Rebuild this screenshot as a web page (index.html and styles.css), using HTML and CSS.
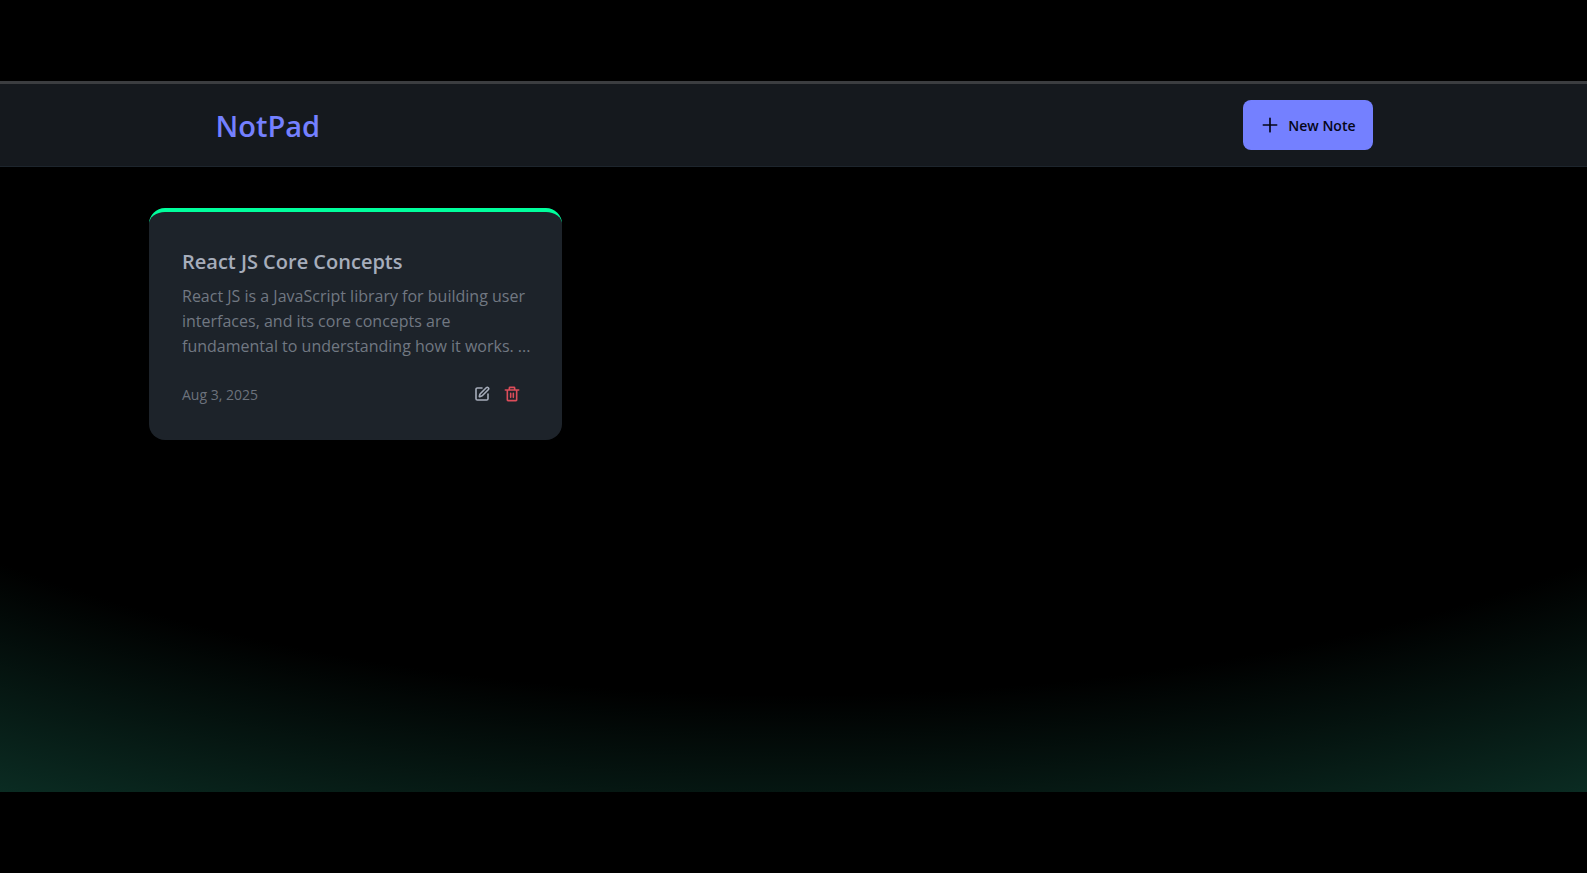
FILE: index.html
```html
<!DOCTYPE html>
<html lang="en">
<head>
<meta charset="utf-8">
<meta name="viewport" content="width=device-width, initial-scale=1">
<title>NotPad</title>
<link rel="stylesheet" href="styles.css">
</head>
<body>
<div class="app">
  <header class="navbar">
    <div class="navbar-inner">
      <h1 class="brand">NotPad</h1>
      <button class="new-note" type="button">
        <svg class="icon-plus" viewBox="0 0 24 24" aria-hidden="true"><path d="M4 12h16M12 4v16"/></svg>
        <span>New Note</span>
      </button>
    </div>
  </header>
  <main class="notes">
    <article class="card">
      <h2 class="card-title">React JS Core Concepts</h2>
      <p class="card-text">React JS is a JavaScript library for building user<br>interfaces, and its core concepts are<br>fundamental to understanding how it works. ...</p>
      <footer class="card-footer">
        <time class="card-date" datetime="2025-08-03">Aug 3, 2025</time>
        <div class="card-actions">
          <button class="icon-button" type="button" aria-label="Edit note">
            <svg class="icon" viewBox="0 0 24 24" aria-hidden="true"><path d="M12 3H5a2 2 0 0 0-2 2v14a2 2 0 0 0 2 2h14a2 2 0 0 0 2-2v-7"/><path d="M18.375 2.625a1 1 0 0 1 3 3l-9.013 9.014a2 2 0 0 1-.853.505l-2.873.84a.5.5 0 0 1-.62-.62l.84-2.873a2 2 0 0 1 .506-.852z"/></svg>
          </button>
          <button class="icon-button danger" type="button" aria-label="Delete note">
            <svg class="icon" viewBox="0 0 24 24" aria-hidden="true"><path d="M2 6h20M19 6v15a1 1 0 0 1-1 1H6a1 1 0 0 1-1-1V6M8 6V3a1 1 0 0 1 1-1h6a1 1 0 0 1 1 1v3M10 11v6M14 11v6"/></svg>
          </button>
        </div>
      </footer>
    </article>
  </main>
</div>
</body>
</html>
```
FILE: styles.css
```css
* { box-sizing: border-box; }

body {
  margin: 0;
  padding: 81px 0;
  background: #000;
  color: #a6adbb;
  font-family: "Segoe UI", "Open Sans", "Noto Sans", sans-serif;
}

.app {
  min-height: calc(100vh - 162px);
  border-top: 3px solid #3b3d40;
  background: radial-gradient(125% 125% at 50% 10%, #000 61%, #00ff9d40 105%) #1d232a;
}

.navbar {
  background: #15191e;
  border-bottom: 1px solid #1d252d;
}

.navbar-inner {
  display: flex;
  align-items: center;
  justify-content: space-between;
  max-width: 1190px;
  margin: 0 auto;
  padding: 16px 16px 16px 17px;
}

.brand {
  margin: 0;
  padding-top: 2px;
  color: #7480ff;
  font-size: 29px;
  font-weight: 600;
  line-height: 40px;
}

.new-note {
  display: flex;
  align-items: center;
  gap: 8px;
  height: 50px;
  padding: 0 17px;
  border: 0;
  border-radius: 8px;
  background: #7480ff;
  color: #050617;
  font-family: inherit;
  font-size: 14px;
  font-weight: 600;
}

.icon-plus,
.icon {
  fill: none;
  stroke: currentColor;
  stroke-width: 2;
  stroke-linecap: round;
  stroke-linejoin: round;
}

.icon-plus {
  width: 20px;
  height: 20px;
}

.notes {
  display: grid;
  grid-template-columns: repeat(3, minmax(0, 1fr));
  gap: 25px;
  max-width: 1321px;
  margin: 0 auto;
  padding: 41px 16px;
}

.card {
  padding: 35px 33px 32px;
  border-top: 4px solid #00ff9d;
  border-radius: 16px;
  background: #1d232a;
}

.card-title {
  margin: 0 0 8px;
  font-size: 20px;
  font-weight: 600;
  line-height: 29px;
}

.card-text {
  margin: 0;
  color: #717882;
  font-size: 16px;
  line-height: 25px;
  white-space: nowrap;
}

.card-footer {
  display: flex;
  align-items: flex-start;
  justify-content: space-between;
  margin-top: 23px;
}

.card-date {
  color: #6c727c;
  font-size: 14px;
  line-height: 26px;
}

.card-actions {
  display: flex;
  gap: 4px;
  padding-right: 4px;
}

.icon-button {
  display: flex;
  padding: 4px 5px;
  border: 0;
  background: none;
  color: #a6adbb;
}

.danger {
  color: #dc4d5a;
}

.icon {
  width: 16px;
  height: 16px;
  stroke-width: 2.4;
}
```
